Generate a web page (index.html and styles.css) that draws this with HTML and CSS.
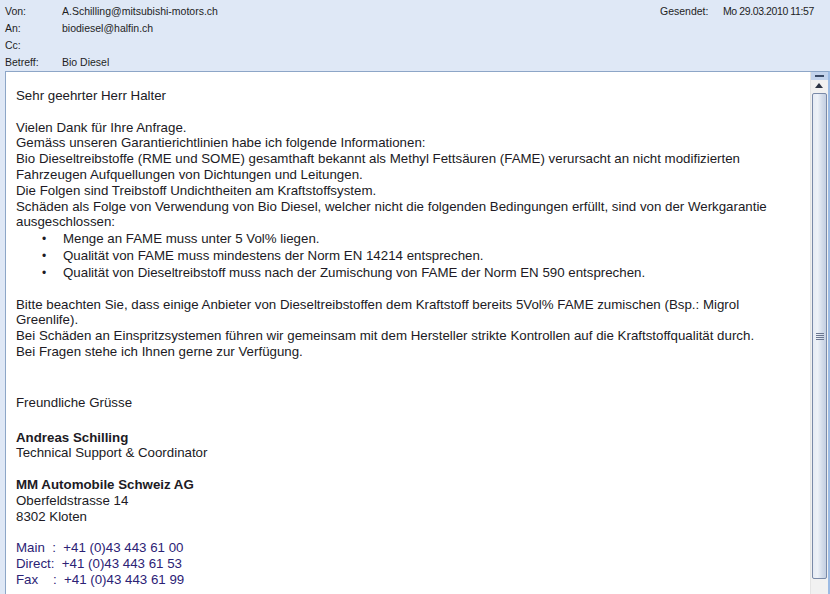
FILE: index.html
```html
<!DOCTYPE html>
<html lang="de">
<head>
  <meta charset="UTF-8" />
  <title>Bio Diesel</title>
  <link rel="stylesheet" href="styles.css">
</head>
<body>
  <div class="header">
    <div class="fields">
      <div class="row"><span class="label">Von:</span><span>A.Schilling@mitsubishi-motors.ch</span></div>
      <div class="row"><span class="label">An:</span><span>biodiesel@halfin.ch</span></div>
      <div class="row"><span class="label">Cc:</span><span></span></div>
      <div class="row"><span class="label">Betreff:</span><span>Bio Diesel</span></div>
    </div>
    <div class="sent">
      <div class="row"><span class="label">Gesendet:</span><span class="date">Mo 29.03.2010 11:57</span></div>
    </div>
  </div>

  <div class="message">
    <div class="body">
      <p>Sehr geehrter Herr Halter</p>
      <p class="tight">Vielen Dank für Ihre Anfrage.<br>
      Gemäss unseren Garantierichtlinien habe ich folgende Informationen:<br>
      Bio Dieseltreibstoffe (RME und SOME) gesamthaft bekannt als Methyl Fettsäuren (FAME) verursacht an nicht modifizierten<br>
      Fahrzeugen Aufquellungen von Dichtungen und Leitungen.<br>
      Die Folgen sind Treibstoff Undichtheiten am Kraftstoffsystem.<br>
      Schäden als Folge von Verwendung von Bio Diesel, welcher nicht die folgenden Bedingungen erfüllt, sind von der Werkgarantie<br>
      ausgeschlossen:</p>
      <ul>
        <li>Menge an FAME muss unter 5 Vol% liegen.</li>
        <li>Qualität von FAME muss mindestens der Norm EN 14214 entsprechen.</li>
        <li>Qualität von Dieseltreibstoff muss nach der Zumischung von FAME der Norm EN 590 entsprechen.</li>
      </ul>
      <p>Bitte beachten Sie, dass einige Anbieter von Dieseltreibstoffen dem Kraftstoff bereits 5Vol% FAME zumischen (Bsp.: Migrol<br>
      Greenlife).<br>
      Bei Schäden an Einspritzsystemen führen wir gemeinsam mit dem Hersteller strikte Kontrollen auf die Kraftstoffqualität durch.<br>
      Bei Fragen stehe ich Ihnen gerne zur Verfügung.</p>
      <p class="closing">Freundliche Grüsse</p>
      <p class="signature"><b>Andreas Schilling</b><br>
      Technical Support &amp; Coordinator</p>
      <p><b>MM Automobile Schweiz AG</b><br>
      Oberfeldstrasse 14<br>
      8302 Kloten</p>
      <p class="phones">Main&nbsp;&nbsp;:&nbsp;&nbsp;+41 (0)43 443 61 00<br>
      Direct:&nbsp;&nbsp;+41 (0)43 443 61 53<br>
      Fax&nbsp;&nbsp;&nbsp;&nbsp;:&nbsp;&nbsp;+41 (0)43 443 61 99</p>
    </div>

    <div class="scrollbar">
      <div class="split"></div>
      <div class="arrow"></div>
      <div class="thumb"><span class="grip"></span></div>
      <div class="track"></div>
    </div>
  </div>
</body>
</html>
```

FILE: styles.css
```css
html, body {
  height: 100%;
}

body {
  margin: 0;
  background: #dfe8f6;
  font-family: 'Liberation Sans', Arial, sans-serif;
  overflow: hidden;
  display: flex;
  flex-direction: column;
}

.header {
  height: 71px;
  display: flex;
  justify-content: space-between;
  padding: 3px 18px 0 5px;
  box-sizing: border-box;
  font-size: 10.5px;
  color: #1e1e1e;
}

.row {
  height: 17px;
  line-height: 17px;
  display: flex;
  white-space: nowrap;
}

.fields .label {
  width: 57px;
}

.sent {
  width: 152px;
}

.sent .label {
  width: 63px;
  flex: none;
}

.sent .date {
  letter-spacing: -0.4px;
}

.message {
  flex: 1;
  margin-left: 5px;
  background: white;
  border-top: 1px solid #8da6c7;
  border-left: 1px solid #8da6c7;
  border-right: 2px solid #9cbbe4;
  display: flex;
  min-height: 0;
}

.body {
  flex: 1;
  padding: 16px 0 0 10px;
  font-size: 13.3px;
  line-height: 15.8px;
  color: #201a24;
}

.body p {
  margin: 0 0 15.8px;
}

.body p.tight {
  margin-bottom: 1px;
}

.body ul {
  margin: 0 0 15px;
  padding-left: 26px;
  list-style: none;
}

.body li::before {
  content: "•";
  display: inline-block;
  width: 21px;
  font-size: 12px;
}

.body .closing {
  margin-top: 35px;
}

.body .signature {
  margin-top: 19px;
}

.phones {
  color: #2c2275;
}

.scrollbar {
  width: 17px;
  display: flex;
  flex-direction: column;
  background: #f1f1f1;
  border-left: 1px solid #e4e4e4;
}

.split {
  height: 8px;
  background: #c3d3ec;
  position: relative;
}

.split::after {
  content: "";
  position: absolute;
  left: 4px;
  top: 3px;
  width: 9px;
  height: 2px;
  background: #3a4a66;
}

.arrow {
  height: 13px;
  position: relative;
}

.arrow::after {
  content: "";
  position: absolute;
  left: 4px;
  top: 3px;
  border-left: 4px solid transparent;
  border-right: 4px solid transparent;
  border-bottom: 5px solid #2b3344;
}

.thumb {
  height: 484px;
  margin: 0 1px;
  border: 1px solid #7a8aa8;
  border-radius: 2px;
  background: linear-gradient(to right, #e6ebf4 0%, #eef2f8 35%, #d3dcea 70%, #c4cfe2 100%);
  display: flex;
  align-items: center;
  justify-content: center;
}

.grip {
  width: 8px;
  height: 7px;
  background: repeating-linear-gradient(to bottom, #6b7690 0 1px, transparent 1px 2px);
}

.track {
  flex: 1;
}
```
